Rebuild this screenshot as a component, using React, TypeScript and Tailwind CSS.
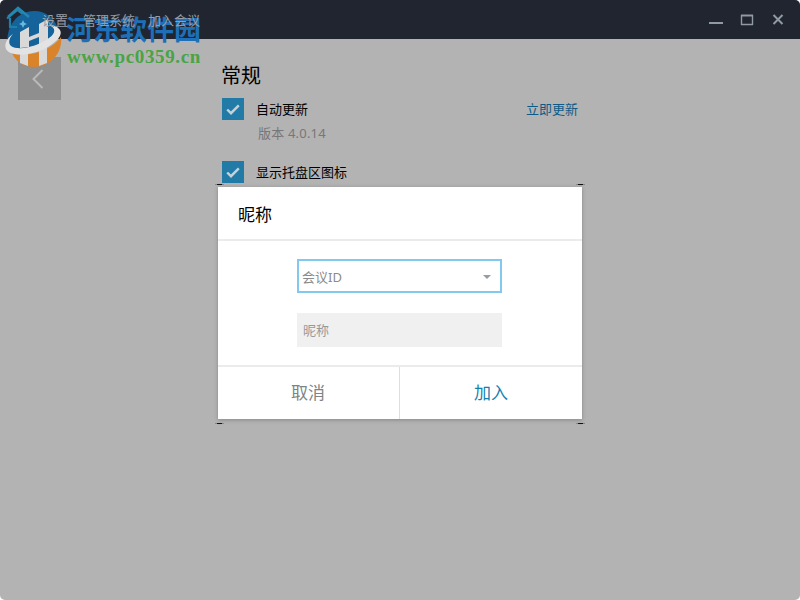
import type { ReactNode } from "react";

function HomeIcon() {
  return (
    <svg width="24" height="24" viewBox="0 0 24 24" fill="none" stroke="#1f83ac" strokeWidth="2.2">
      <path d="M1 10.5 11.5 2 22 10.5" />
      <path d="M4 10v8h5M19 10v8h-4" />
    </svg>
  );
}

function TitleBar() {
  return (
    <header className="flex h-[39px] shrink-0 items-center bg-[#212530] text-[13px] leading-5 text-[#989ca4]">
      <div className="ml-[6px] w-9 pt-px">
        <HomeIcon />
      </div>
      <nav className="relative z-10 flex gap-[14px] pt-px">
        <span className="mr-px">设置</span>
        <span>管理系统</span>
        <span className="-ml-px">加入会议</span>
      </nav>
      <div className="mr-[15px] ml-auto flex items-center gap-[17px]">
        <svg width="14" height="14" viewBox="0 0 14 14" fill="none" stroke="#9199a3" strokeWidth="2">
          <path d="M0 10h14" />
        </svg>
        <svg width="14" height="14" viewBox="0 0 14 14" fill="none" stroke="#9199a3">
          <path d="M1.5 2v10M12.5 2v10M1 11.5h12" strokeWidth="1.4" />
          <path d="M1 2.5h12" strokeWidth="2" />
        </svg>
        <svg width="14" height="14" viewBox="0 0 14 14" fill="none" stroke="#9199a3" strokeWidth="2">
          <path d="M2.5 2l9 9M11.5 2l-9 9" />
        </svg>
      </div>
    </header>
  );
}

function CheckRow({ label, children }: { label: string; children?: ReactNode }) {
  return (
    <div className="flex h-[22px] items-center">
      <span className="flex size-[22px] items-center justify-center bg-[#227ba7]">
        <svg width="14" height="12" viewBox="0 0 14 12" fill="none" stroke="#c3d3db" strokeWidth="2.4">
          <path d="M1.2 6.5 5 10.2 12.8 2.4" />
        </svg>
      </span>
      <span className="ml-3 text-[13px] leading-5 text-black">{label}</span>
      {children}
    </div>
  );
}

function Dialog() {
  return (
    <section className="flex h-[232px] w-[364px] flex-col bg-white shadow-[0_1px_4px_rgba(0,0,0,0.25)]">
      <h2 className="flex h-[54px] items-center border-b-2 border-[#ebebeb] pt-[3px] pl-5 text-[17px] leading-6 text-black">
        昵称
      </h2>
      <div className="flex flex-1 flex-col items-start gap-5 pt-[18px] pl-[79px] text-[13px] leading-5 text-[#8b8b8b]">
        <div className="flex h-[34px] w-[205px] items-center border-2 border-[#83c9eb] pr-[9px] pl-[3px]">
          <span className="pt-px">会议ID</span>
          <svg className="mt-px ml-auto" width="8" height="4" viewBox="0 0 8 4">
            <path d="M0 0h8L4 4z" fill="#929da6" />
          </svg>
        </div>
        <div className="flex h-[34px] w-[205px] items-center bg-[#f0f0f0] pl-1.5 text-[#999]">昵称</div>
      </div>
      <div className="flex h-[54px] border-t-2 border-[#ebebeb] text-[17px] leading-6">
        <button className="w-[182px] border-r border-[#dedede] pr-px text-[#7e8484]">取消</button>
        <button className="flex-1 text-[#147fb1]">加入</button>
      </div>
    </section>
  );
}

function CornerMark({ className }: { className: string }) {
  return (
    <svg className={"absolute " + className} width="9" height="2" viewBox="0 0 9 2">
      <path d="M0 .5h9" stroke="#888" />
      <path d="M2 .5h5" stroke="#111" />
      <path d="M3 1.5h3" stroke="#aaa" />
    </svg>
  );
}

function Watermark() {
  return (
    <div className="absolute top-0 left-0">
      <svg className="absolute top-0 left-0" width="66" height="72" viewBox="0 0 66 72">
        <path d="M9 49C3 31 15 11 34 11C46 11 55 18 59 31C59 42 32 52 9 49Z" fill="#14639a" />
        <path d="M12 53C30 58 52 50 61 37C63 54 49 67 34 67C24 67 16 62 12 53Z" fill="#d9832b" />
        <path d="M20 32 29 27V47L20 48Z" fill="#d9d9d9" />
        <path d="M39 24 48 19V41L39 45Z" fill="#d9d9d9" />
        <path d="M29 37 39 33V37L29 41Z" fill="#d9d9d9" />
        <path d="M20 50 28 49V66L20 63ZM39 49 47 45V63L39 66Z" fill="#d9d9d9" />
        <path
          d="M13 34C7 38 4 44 6 49C10 57 32 56 46 48C57 42 63 35 60 30C58 27 54 25 49 25C56 28 56 33 49 38C37 47 18 51 11 46C8 43 9 38 13 34Z"
          fill="#e3e3e3"
        />
        <path d="M8 17 18 8 29 17" fill="none" stroke="#2487b1" strokeWidth="2.5" />
        <path d="M10 20v7h7" fill="none" stroke="#207fa8" strokeWidth="2" />
        <path d="m23 20 1.3 2.7 2.7 1.3-2.7 1.3L23 28l-1.3-2.7L19 24l2.7-1.3Z" fill="#65b9df" />
      </svg>
      <div className="absolute top-[14px] left-[66px] font-['Noto_Sans_CJK_SC',sans-serif] text-[27px] leading-[29px] font-bold whitespace-nowrap text-[#1d70b8]">
        河东软件园
      </div>
      <div className="absolute top-[46px] left-[67px] font-['Liberation_Serif',serif] text-[19px] leading-[22px] font-bold tracking-[0.65px] whitespace-nowrap text-[#48a444]">
        www.pc0359.cn
      </div>
    </div>
  );
}

export default function App() {
  return (
    <div className="h-[600px] w-[800px] bg-white" lang="zh-CN">
      <div className="relative flex h-full w-full flex-col overflow-hidden rounded-[5px] bg-[#b3b3b3] font-['Noto_Sans','Noto_Sans_CJK_SC',sans-serif]">
        <TitleBar />
        <main className="flex flex-1 items-start">
          <button className="mt-[18px] ml-[18px] flex h-[43px] w-[43px] items-center justify-center bg-[#8f8f8f] pr-[3px]">
            <svg width="12" height="20" viewBox="0 0 12 20" fill="none" stroke="#b9b9b9" strokeWidth="2">
              <path d="M10.5 1 1.5 10l9 9" />
            </svg>
          </button>
          <div className="ml-[160px] w-[357px] pt-[23px]">
            <h1 className="text-[20px] leading-7 text-black">常规</h1>
            <div className="mt-2 ml-px">
              <CheckRow label="自动更新">
                <a className="ml-auto text-[13px] leading-5 text-[#0d5b85]">立即更新</a>
              </CheckRow>
              <p className="mt-[3px] mb-[18px] ml-9 text-[13px] leading-5 tracking-[0.2px] text-[#777]">版本 4.0.14</p>
              <CheckRow label="显示托盘区图标" />
            </div>
          </div>
        </main>
        <div className="absolute top-[187px] left-[218px]">
          <Dialog />
          <CornerMark className="-top-[3px] -left-[3px]" />
          <CornerMark className="-top-[3px] left-[358px]" />
          <CornerMark className="top-[236px] -left-[3px]" />
          <CornerMark className="top-[236px] left-[358px]" />
        </div>
        <Watermark />
      </div>
    </div>
  );
}
